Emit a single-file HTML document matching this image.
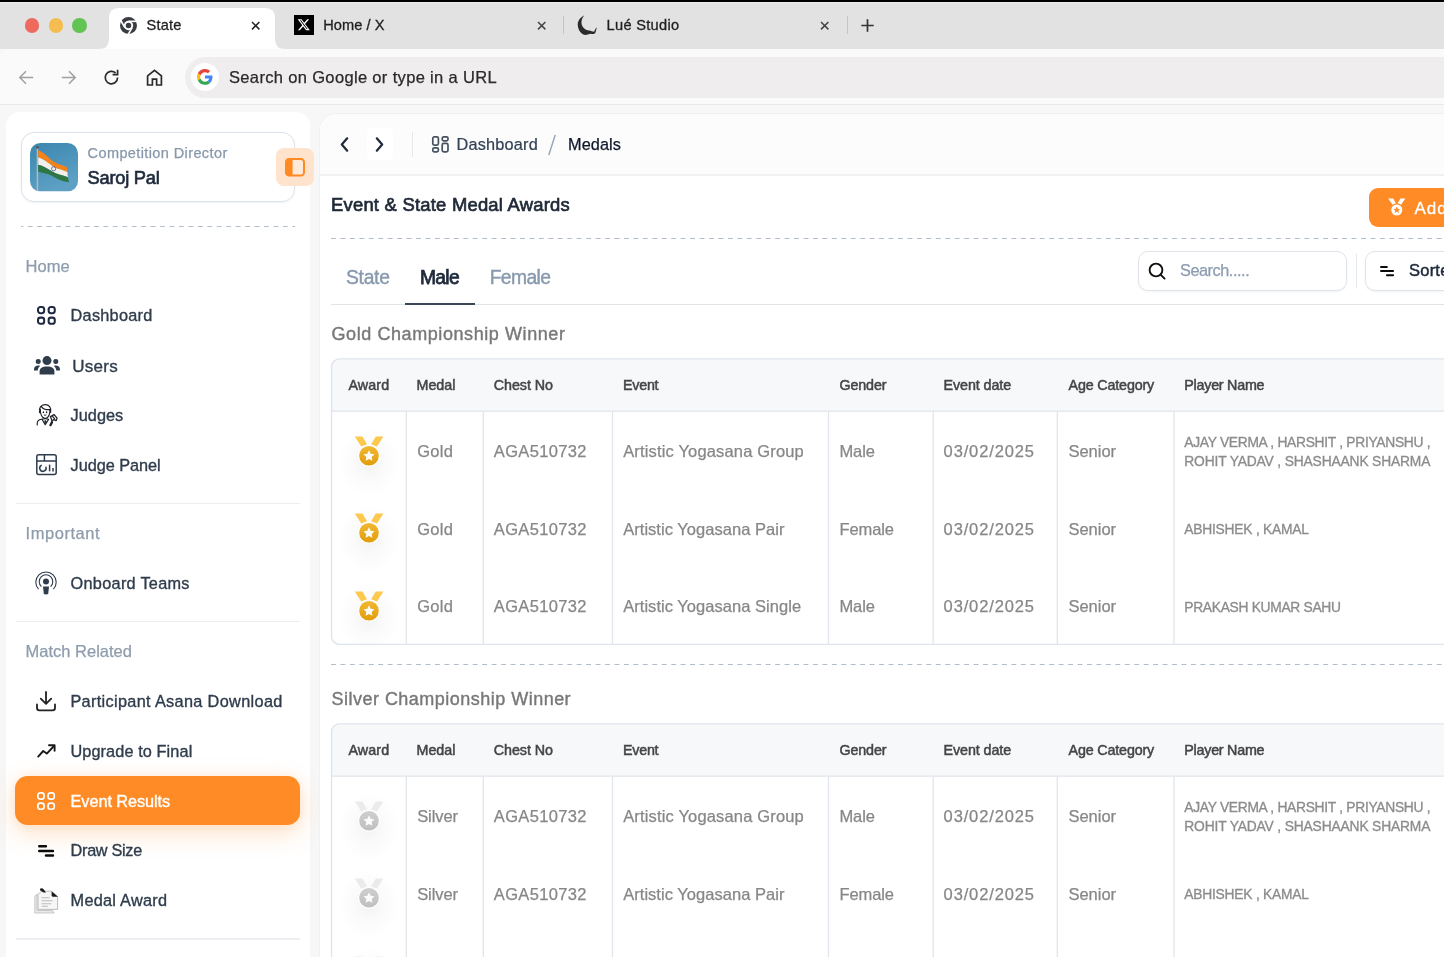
<!DOCTYPE html><html><head><meta charset="utf-8"><title>State</title><style>
html,body{margin:0;padding:0}
body{width:1444px;height:957px;overflow:hidden;position:relative;background:#f7f7f7;
 font-family:"Liberation Sans",sans-serif;}
.t{position:absolute;white-space:nowrap;font-family:"Liberation Sans",sans-serif}
.a{position:absolute}
svg{position:absolute;overflow:visible}
</style></head><body><div id="wrap" style="position:absolute;left:0;top:0;width:1444px;height:957px;will-change:transform;overflow:hidden">
<div class="a" style="left:0;top:0;width:1444px;height:49px;background:#e2e2e2"></div>
<div class="a" style="left:0;top:0;width:1444px;height:2px;background:#000"></div>
<div class="a" style="left:0;top:2px;width:1444px;height:1px;background:#ececec"></div>
<div class="a" style="left:0;top:49px;width:1444px;height:55px;background:#fafafa;border-top-left-radius:9px"></div>
<div class="a" style="left:0;top:104px;width:1444px;height:1px;background:#e9e9e9"></div>
<svg style="left:99px;top:8px" width="190" height="41" viewBox="0 0 190 41"><path d="M0 41 Q10 41 10 31 L10 10 Q10 0 20 0 L166 0 Q176 0 176 10 L176 31 Q176 41 186 41 Z" fill="#ffffff"/></svg>
<div class="a" style="left:24.8px;top:18.4px;width:14.4px;height:14.4px;border-radius:50%;background:#ee6a5f"></div>
<div class="a" style="left:48.6px;top:18.4px;width:14.4px;height:14.4px;border-radius:50%;background:#f5bd4f"></div>
<div class="a" style="left:72.3px;top:18.4px;width:14.4px;height:14.4px;border-radius:50%;background:#61c454"></div>
<svg style="left:119.6px;top:16.5px" width="17" height="17" viewBox="0 0 24 24">
<circle cx="12" cy="12" r="12" fill="#3a3d42"/>
<g stroke="#fff" stroke-width="2.3"><path d="M12 6.1 H24"/><path d="M12 6.1 H24" transform="rotate(120 12 12)"/><path d="M12 6.1 H24" transform="rotate(240 12 12)"/></g>
<circle cx="12" cy="12" r="6.6" fill="#fff"/>
<circle cx="12" cy="12" r="3.9" fill="#3a3d42"/>
</svg>
<div class="t" style="left:146.5px;top:18px;font-size:14.6px;line-height:14.6px;color:#1f1f1f;-webkit-text-stroke:0.3px #1f1f1f;letter-spacing:0.182px;">State</div>
<svg style="left:252.3px;top:21.6px" width="7.4" height="7.4" viewBox="0 0 7.4 7.4"><path d="M0 0 L7.4 7.4 M7.4 0 L0 7.4" stroke="#222" stroke-width="1.5"/></svg>
<div class="a" style="left:294px;top:14.5px;width:19.5px;height:20.5px;background:#000"></div>
<svg style="left:297px;top:18px" width="13.5" height="13.5" viewBox="0 0 24 24"><path d="M18.244 2.25h3.308l-7.227 8.26 8.502 11.24H16.17l-5.214-6.817L4.99 21.75H1.68l7.73-8.835L1.254 2.25H8.08l4.713 6.231zm-1.161 17.52h1.833L7.084 4.126H5.117z" fill="#fff"/></svg>
<div class="t" style="left:323.2px;top:18px;font-size:14.6px;line-height:14.6px;color:#1f1f1f;-webkit-text-stroke:0.3px #1f1f1f;letter-spacing:0.056px;">Home / X</div>
<svg style="left:537.5px;top:21.7px" width="7.4" height="7.4" viewBox="0 0 7.4 7.4"><path d="M0 0 L7.4 7.4 M7.4 0 L0 7.4" stroke="#444" stroke-width="1.5"/></svg>
<div class="a" style="left:563px;top:15.5px;width:1.2px;height:18px;background:#c4c4c4"></div>
<svg style="left:577px;top:15px" width="21" height="21" viewBox="0 0 21 21"><path d="M7.4 0.2 C3 2.5 0.4 6 0.8 10.4 C1.2 15.4 4.6 20 9 19.9 C11.6 19.8 12.6 18.6 14.4 18.9 C16.6 19.4 18.4 18.8 18.9 16.2 L19.8 12.3 C18.4 13.6 17.6 15.2 17.2 16.8 C15.4 16.6 14 15.6 12 15.4 C8 15 4.7 12 4.5 8 C4.4 5 5.5 2.2 7.4 0.2 Z" fill="#2b2b2e"/></svg>
<div class="t" style="left:606.6px;top:18px;font-size:14.6px;line-height:14.6px;color:#1f1f1f;-webkit-text-stroke:0.3px #1f1f1f;letter-spacing:0.299px;">Lué Studio</div>
<svg style="left:820.7px;top:21.6px" width="7.4" height="7.4" viewBox="0 0 7.4 7.4"><path d="M0 0 L7.4 7.4 M7.4 0 L0 7.4" stroke="#444" stroke-width="1.5"/></svg>
<div class="a" style="left:846.5px;top:15.5px;width:1.2px;height:18px;background:#c4c4c4"></div>
<svg style="left:861px;top:19px" width="13" height="13" viewBox="0 0 13 13"><path d="M6.5 0.3 V12.7 M0.3 6.5 H12.7" stroke="#333" stroke-width="1.7"/></svg>
<svg style="left:18px;top:69px" width="17" height="17" viewBox="0 0 17 17"><path d="M15.2 8.5 H2 M8 2.2 L1.8 8.5 L8 14.8" fill="none" stroke="#a0a0a0" stroke-width="1.5" stroke-linejoin="miter"/></svg>
<svg style="left:60px;top:69px" width="17" height="17" viewBox="0 0 17 17"><path d="M1.8 8.5 H15 M9 2.2 L15.2 8.5 L9 14.8" fill="none" stroke="#a0a0a0" stroke-width="1.5"/></svg>
<svg style="left:102.5px;top:68.5px" width="17" height="17" viewBox="0 0 17 17"><path d="M14.6 8.6 A6.2 6.2 0 1 1 12.6 4" fill="none" stroke="#2b2b2b" stroke-width="1.7"/><path d="M9.6 5.6 H14.6 V0.8" fill="none" stroke="#2b2b2b" stroke-width="1.7"/></svg>
<svg style="left:146px;top:68.5px" width="17" height="17" viewBox="0 0 17 17"><path d="M1.6 16 V6.8 L8.5 1.3 L15.4 6.8 V16 H10.6 V10.2 H6.4 V16 Z" fill="none" stroke="#2b2b2b" stroke-width="1.7" stroke-linejoin="miter"/></svg>
<div class="a" style="left:185px;top:57px;width:1300px;height:41px;border-radius:20.5px;background:#efedee"></div>
<div class="a" style="left:191px;top:63px;width:28px;height:28px;border-radius:50%;background:#fff"></div>
<svg style="left:197.2px;top:69.2px" width="15.8" height="15.8" viewBox="0 0 48 48">
<path fill="#EA4335" d="M24 9.5c3.54 0 6.71 1.22 9.21 3.6l6.85-6.85C35.9 2.38 30.47 0 24 0 14.62 0 6.51 5.38 2.56 13.22l7.98 6.19C12.43 13.72 17.74 9.5 24 9.5z"/>
<path fill="#4285F4" d="M46.98 24.55c0-1.57-.15-3.09-.38-4.55H24v9.02h12.94c-.58 2.96-2.26 5.48-4.78 7.18l7.73 6c4.51-4.18 7.09-10.36 7.09-17.65z"/>
<path fill="#FBBC05" d="M10.53 28.59c-.48-1.45-.76-2.99-.76-4.59s.27-3.14.76-4.59l-7.98-6.19C.92 16.46 0 20.12 0 24c0 3.88.92 7.54 2.56 10.78l7.97-6.19z"/>
<path fill="#34A853" d="M24 48c6.48 0 11.93-2.13 15.89-5.81l-7.73-6c-2.15 1.45-4.92 2.3-8.16 2.3-6.26 0-11.57-4.22-13.47-9.91l-7.98 6.19C6.51 42.62 14.62 48 24 48z"/></svg>
<div class="t" style="left:229.0px;top:69px;font-size:16.5px;line-height:16.5px;color:#2a2a2a;-webkit-text-stroke:0.25px #2a2a2a;letter-spacing:0.339px;">Search on Google or type in a URL</div>
<div class="a" style="left:6px;top:112px;width:304px;height:860px;background:#fff;border-radius:14px 14px 0 0"></div>
<div class="a" style="left:20.6px;top:132px;width:274.4px;height:70.2px;border:1.3px solid #dbe2ea;border-radius:13px;box-sizing:border-box;box-shadow:0 1px 2px rgba(100,120,150,.10)"></div>
<svg style="left:30px;top:142.7px" width="48" height="48.5" viewBox="0 0 48 48.5">
<defs><linearGradient id="sky" x1="0" y1="0" x2="0.4" y2="1"><stop offset="0" stop-color="#3b86b0"/><stop offset="1" stop-color="#5da0c4"/></linearGradient>
<clipPath id="avc"><rect x="0" y="0" width="48" height="48.5" rx="10.5"/></clipPath></defs>
<g clip-path="url(#avc)"><rect width="48" height="48.5" fill="url(#sky)"/>
<rect x="6.7" y="4.5" width="1.5" height="44" fill="#b9b9b4"/><rect x="6.2" y="3.3" width="2.4" height="2.2" fill="#5a4a3a"/>
<path d="M8.2 7.3 C13 8.6 17 13.6 22 17.4 C27 21.2 32 21.6 37.2 24.4 L37.4 29 C32 26.4 27.4 26.4 22.4 23 C17.4 19.6 13 15.6 8.2 14.6 Z" fill="#f6821a"/>
<path d="M8.2 14.6 C13 15.6 17.4 19.6 22.4 23 C27.4 26.4 32 26.4 37.4 29 L37.8 34.2 C32.4 31.8 27.6 31.8 22.6 28.8 C17.6 25.8 13 22.6 8.2 21.8 Z" fill="#f3f0ea"/>
<path d="M8.2 21.8 C13 22.6 17.6 25.8 22.6 28.8 C27.6 31.8 32.4 31.8 37.8 34.2 L38.9 39.2 C33 38.6 28 36.2 23 33.4 C18 30.6 13 29.8 8.2 28.8 Z" fill="#2e7744"/>
<circle cx="23.6" cy="25.8" r="2.1" fill="none" stroke="#4a5a8a" stroke-width=".8"/>
</g></svg>
<div class="t" style="left:87.6px;top:146px;font-size:14.5px;line-height:14.5px;color:#8797aa;-webkit-text-stroke:0.25px #8797aa;letter-spacing:0.393px;">Competition Director</div>
<div class="t" style="left:87.6px;top:169px;font-size:18.3px;line-height:18.3px;color:#1e293b;-webkit-text-stroke:0.65px #1e293b;letter-spacing:-0.250px;">Saroj Pal</div>
<div class="a" style="left:276px;top:148.3px;width:38px;height:37.4px;border-radius:8px;background:#ffe3cc"></div>
<svg style="left:285px;top:157.7px" width="20" height="18.6" viewBox="0 0 20 18.6"><rect x="1" y="1" width="18" height="16.6" rx="3.2" fill="#ffe9d8" stroke="#ff8a24" stroke-width="2"/><path d="M3.8 0.6 H7.6 V18 H3.8 A3.2 3.2 0 0 1 0.6 14.8 V3.8 A3.2 3.2 0 0 1 3.8 0.6Z" fill="#ff8a24"/></svg>
<svg style="left:21px;top:226px" width="274" height="1" viewBox="0 0 274 1"><path d="M0 0.5 H274" stroke="#b3bfcc" stroke-width="1" stroke-dasharray="4.9 4.55" stroke-dashoffset="2.7"/></svg>
<div class="t" style="left:25.6px;top:258px;font-size:16.5px;line-height:16.5px;color:#8e9cac;-webkit-text-stroke:0.25px #8e9cac;letter-spacing:0.047px;">Home</div>
<div class="t" style="left:25.6px;top:525px;font-size:16.5px;line-height:16.5px;color:#8e9cac;-webkit-text-stroke:0.25px #8e9cac;letter-spacing:0.534px;">Important</div>
<div class="t" style="left:25.6px;top:643px;font-size:16.5px;line-height:16.5px;color:#8e9cac;-webkit-text-stroke:0.25px #8e9cac;letter-spacing:-0.006px;">Match Related</div>
<div class="a" style="left:15.5px;top:502.6px;width:284.5px;height:1.3px;background:#eceef1"></div>
<div class="a" style="left:15.5px;top:620.8px;width:284.5px;height:1.3px;background:#eceef1"></div>
<div class="a" style="left:15.5px;top:938.3px;width:284.5px;height:1.3px;background:#eceef1"></div>
<div class="a" style="left:15.4px;top:775.5px;width:284.8px;height:49.7px;border-radius:12.5px;background:#ff8b26;box-shadow:0 8px 24px rgba(255,139,38,.26), 0 0 10px rgba(255,139,38,.12)"></div>
<div class="t" style="left:70.6px;top:307px;font-size:16.3px;line-height:16.3px;color:#2f3c4c;-webkit-text-stroke:0.35px #2f3c4c;letter-spacing:0.252px;">Dashboard</div>
<div class="t" style="left:72.3px;top:358px;font-size:17px;line-height:17px;color:#2f3c4c;-webkit-text-stroke:0.35px #2f3c4c;letter-spacing:0.262px;">Users</div>
<div class="t" style="left:70.6px;top:407px;font-size:16.3px;line-height:16.3px;color:#2f3c4c;-webkit-text-stroke:0.35px #2f3c4c;letter-spacing:0.024px;">Judges</div>
<div class="t" style="left:70.6px;top:457px;font-size:16.3px;line-height:16.3px;color:#2f3c4c;-webkit-text-stroke:0.35px #2f3c4c;letter-spacing:-0.057px;">Judge Panel</div>
<div class="t" style="left:70.6px;top:575px;font-size:16.3px;line-height:16.3px;color:#2f3c4c;-webkit-text-stroke:0.35px #2f3c4c;letter-spacing:0.280px;">Onboard Teams</div>
<div class="t" style="left:70.4px;top:693px;font-size:16.3px;line-height:16.3px;color:#2f3c4c;-webkit-text-stroke:0.35px #2f3c4c;letter-spacing:0.332px;">Participant Asana Download</div>
<div class="t" style="left:70.4px;top:743px;font-size:16.3px;line-height:16.3px;color:#2f3c4c;-webkit-text-stroke:0.35px #2f3c4c;letter-spacing:0.100px;">Upgrade to Final</div>
<div class="t" style="left:70.6px;top:793px;font-size:16.3px;line-height:16.3px;color:#ffffff;-webkit-text-stroke:0.35px #ffffff;letter-spacing:-0.081px;">Event Results</div>
<div class="t" style="left:70.6px;top:842px;font-size:16.3px;line-height:16.3px;color:#2f3c4c;-webkit-text-stroke:0.35px #2f3c4c;letter-spacing:-0.319px;">Draw Size</div>
<div class="t" style="left:70.6px;top:892px;font-size:16.3px;line-height:16.3px;color:#2f3c4c;-webkit-text-stroke:0.35px #2f3c4c;letter-spacing:0.252px;">Medal Award</div>
<svg style="left:36.9px;top:305.9px" width="18.8" height="18.8" viewBox="0 0 18.8 18.8"><rect x="1.02" y="1.02" width="6.15" height="6.15" rx="2.4" fill="none" stroke="#1f2942" stroke-width="2.05"/><rect x="11.63" y="1.02" width="6.15" height="6.15" rx="2.4" fill="none" stroke="#1f2942" stroke-width="2.05"/><rect x="1.02" y="11.63" width="6.15" height="6.15" rx="2.4" fill="none" stroke="#1f2942" stroke-width="2.05"/><rect x="11.63" y="11.63" width="6.15" height="6.15" rx="2.4" fill="none" stroke="#1f2942" stroke-width="2.05"/></svg>
<svg style="left:37.1px;top:791.7px" width="18.1" height="18.1" viewBox="0 0 18.1 18.1"><rect x="0.85" y="0.85" width="6.19" height="6.19" rx="2.4" fill="none" stroke="#ffffff" stroke-width="1.7"/><rect x="11.06" y="0.85" width="6.19" height="6.19" rx="2.4" fill="none" stroke="#ffffff" stroke-width="1.7"/><rect x="0.85" y="11.06" width="6.19" height="6.19" rx="2.4" fill="none" stroke="#ffffff" stroke-width="1.7"/><rect x="11.06" y="11.06" width="6.19" height="6.19" rx="2.4" fill="none" stroke="#ffffff" stroke-width="1.7"/></svg>
<svg style="left:34px;top:356px" width="26" height="18.4" viewBox="0 0 26 18.4" fill="#2f3c4c">
<circle cx="13" cy="4.6" r="4.5"/><path d="M5.6 18.4 V15.6 C5.6 12.4 8.2 10.6 13 10.6 C17.8 10.6 20.4 12.4 20.4 15.6 V18.4 Z" />
<circle cx="4.2" cy="5.4" r="2.5"/><circle cx="21.8" cy="5.4" r="2.5"/>
<path d="M0 13.6 C0 11 1.6 9.6 4.4 9.6 C5 9.6 5.6 9.7 6.1 9.9 C4.6 11 3.8 12.7 3.8 14.6 H0 Z"/>
<path d="M26 13.6 C26 11 24.4 9.6 21.6 9.6 C21 9.6 20.4 9.7 19.9 9.9 C21.4 11 22.2 12.7 22.2 14.6 H26 Z"/></svg>
<svg style="left:36px;top:404px" width="22" height="23" viewBox="0 0 22 23" fill="none" stroke="#1d2126" stroke-width="1.15" stroke-linecap="round" stroke-linejoin="round">
<path d="M3.6 8.6 C2.6 4 5 0.7 9 0.6 C13 0.5 15.6 3.6 14.6 8.4"/>
<path d="M5.4 2.6 C6.6 4.4 8 5.6 10 5.6 H14.2" stroke-width="1.3"/>
<path d="M4.4 5.4 C4.2 7 4.6 9 5 10.4 C5.8 12.8 7.4 14.2 9.2 14.2 C11 14.2 12.6 12.6 13.4 10.2 C13.8 8.8 14 7 13.8 5.8"/>
<path d="M7.4 8 V8.6 M10.6 8 V8.6" stroke-width="1.4"/><path d="M8.2 11.1 Q9.1 11.9 10 11.1" stroke-width="1"/>
<path d="M1.2 21 C0.8 17.4 2.4 15.4 5.6 15.2 L8.8 14.6"/>
<path d="M6 15.2 L9.2 20.8 L12.6 15.4 L9.6 14.6" />
<path d="M9.3 16.2 L10.3 17.4 L9.5 19.6 L8.6 18.2 Z" fill="#1d2126" stroke-width=".6"/>
<path d="M14.4 12.6 L18.2 10.6 L21 14.2 L20.2 16.6 L17.6 15.6 L16.2 17.2 Z" stroke-width="1.25"/>
<path d="M16.6 12.4 L18.6 14.8 M15.8 17.2 L13.8 21.2 L14.8 21.8 L16.6 18.2" stroke-width="1.2"/>
</svg>
<svg style="left:35.8px;top:454px" width="21" height="21.4" viewBox="0 0 21 21.4" fill="none" stroke="#2f3c4c" stroke-width="1.5">
<rect x="0.8" y="0.8" width="19.4" height="19.8" rx="2"/><path d="M0.8 7 H20.2 M8.4 0.8 V7"/>
<path d="M5.2 11.4 A3.2 3.2 0 1 0 10 13.2" stroke-linecap="round"/><path d="M13.6 10.6 V17.4" /><path d="M17 14 V17.4"/></svg>
<svg style="left:35.2px;top:570.6px" width="22" height="24" viewBox="0 0 22 24" fill="none" stroke="#2f3c4c">
<path d="M3.6 18.2 A10.2 10.2 0 1 1 18.4 18.2" stroke-width="1.1"/><path d="M6.4 15.6 A6.8 6.8 0 1 1 15.6 15.6" stroke-width="1.1"/>
<circle cx="11" cy="10.6" r="3" fill="#2f3c4c" stroke="none"/><path d="M8 15.6 H14 L13.2 23 Q11 23.8 8.8 23 Z" fill="#2f3c4c" stroke="none"/></svg>
<svg style="left:36.2px;top:690.6px" width="20" height="20.4" viewBox="0 0 20 20.4" fill="none" stroke="#222" stroke-width="1.8" stroke-linecap="round" stroke-linejoin="round">
<path d="M10 1 V12.6 M4.8 7.6 L10 12.8 L15.2 7.6"/><path d="M1 13.4 V17 Q1 19.4 3.4 19.4 H16.6 Q19 19.4 19 17 V13.4"/></svg>
<svg style="left:37px;top:743.6px" width="19" height="14" viewBox="0 0 19 14" fill="none" stroke="#1a1a1a" stroke-width="1.9" stroke-linecap="round" stroke-linejoin="round">
<path d="M1.2 12.6 L6.2 7 L9.8 9.6 L17 2"/><path d="M12 1.2 H17.6 V6.8"/></svg>
<svg style="left:38.10px;top:845.15px" width="16.20" height="11.86" viewBox="0 0 16.20 11.86" stroke="#0b0b0b" stroke-width="2.5" stroke-linecap="round"><path d="M1.25 1.25 H7.90 M1.25 5.93 H14.95 M8.00 10.61 H14.95"/></svg>
<svg style="left:34.2px;top:887.6px" width="25" height="25.6" viewBox="0 0 25 25.6">
<path d="M0.8 8.4 L3 6 V22.4 L18.6 22.6 L20.2 25 H0.8 Z" fill="#e9e9e9" stroke="#bdbdbd" stroke-width=".8"/>
<path d="M4 6.4 L7.4 3.2 H17.4 L23.6 8.6 V21.4 H4 Z" fill="#f6f6f6" stroke="#b5b5b5" stroke-width=".9"/>
<path d="M7.6 9.8 H15.6 M7.6 12.8 H18.6 M7.6 15.8 H17.2 M7.6 18.2 H14" stroke="#bcbcbc" stroke-width="1.1"/>
<path d="M17.6 3.2 L24 8.8 H19.2 Q17.6 8.8 17.6 7.2 Z" fill="#1c1c1c"/>
<path d="M6.4 0.6 Q8.4 -0.2 9.8 1.6 L12 4.6 L9.6 4.4 L6.6 2.8 Q5.4 1.4 6.4 0.6Z" fill="#1c1c1c"/></svg>
<div class="a" style="left:320px;top:113.5px;width:1200px;height:860px;background:#fff;border-radius:16px 0 0 0;box-shadow:0 0 0 1px #f1f1f1"></div>
<div class="a" style="left:320px;top:113.5px;width:1200px;height:61px;background:#fcfcfc;border-radius:16px 0 0 0"></div>
<div class="a" style="left:320px;top:174.3px;width:1124px;height:1.3px;background:#f0f1f3"></div>
<div class="a" style="left:367px;top:128px;width:25.5px;height:32px;background:#fff;border-radius:6px"></div>
<svg style="left:340px;top:137px" width="9" height="15" viewBox="0 0 9 15"><path d="M7.2 1.3 L1.8 7.5 L7.2 13.7" fill="none" stroke="#1e293b" stroke-width="2.2" stroke-linecap="round" stroke-linejoin="round"/></svg>
<svg style="left:375px;top:137px" width="9" height="15" viewBox="0 0 9 15"><path d="M1.8 1.3 L7.2 7.5 L1.8 13.7" fill="none" stroke="#1e293b" stroke-width="2.2" stroke-linecap="round" stroke-linejoin="round"/></svg>
<div class="a" style="left:411.7px;top:132px;width:1.2px;height:24.5px;background:#e5e7eb"></div>
<svg style="left:432px;top:136px" width="16.8" height="16.6" viewBox="0 0 16.8 16.6" fill="none" stroke="#46525f" stroke-width="1.7">
<rect x="0.8" y="0.8" width="5.6" height="8.4" rx="1.6"/><rect x="10.2" y="0.8" width="5.8" height="4" rx="1.5"/>
<rect x="0.8" y="11.8" width="5.6" height="4" rx="1.5"/><rect x="10.2" y="7.4" width="5.8" height="8.4" rx="1.6"/></svg>
<div class="t" style="left:456.5px;top:136px;font-size:16.3px;line-height:16.3px;color:#334155;-webkit-text-stroke:0.22px #334155;letter-spacing:0.196px;">Dashboard</div>
<svg style="left:547px;top:134px" width="10" height="22" viewBox="0 0 10 22"><path d="M8.2 1 L1.8 21" stroke="#94a3b8" stroke-width="1.4"/></svg>
<div class="t" style="left:568.0px;top:136px;font-size:16.3px;line-height:16.3px;color:#0f172a;-webkit-text-stroke:0.25px #0f172a;letter-spacing:0.076px;">Medals</div>
<div class="t" style="left:331.0px;top:196px;font-size:18.4px;line-height:18.4px;color:#1f2937;-webkit-text-stroke:0.7px #1f2937;letter-spacing:0.237px;">Event &amp; State Medal Awards</div>
<div class="a" style="left:1369.2px;top:188.2px;width:120px;height:38.4px;border-radius:9px;background:#ff8b26"></div>
<svg style="left:1387.6px;top:198.4px" width="17.6" height="18.4" viewBox="0 0 17.6 18.4"><path d="M0.2 0.6 H5.2 L8.4 6.2 L5.6 8 Z" fill="#fff"/><path d="M17.4 0.6 H12.4 L9.2 6.2 L12 8 Z" fill="#fff"/>
<circle cx="8.8" cy="12" r="6.1" fill="#fff" stroke="#ff8b26" stroke-width="1.1"/><path d="M8.8 8.6 L9.8 10.8 L12.2 11 L10.4 12.6 L11 15 L8.8 13.7 L6.6 15 L7.2 12.6 L5.4 11 L7.8 10.8 Z" fill="#ff8b26"/></svg>
<div class="t" style="left:1414.5px;top:200px;font-size:17px;line-height:17px;color:#fff;-webkit-text-stroke:0.3px #fff;letter-spacing:0.918px;">Add</div>
<svg style="left:331px;top:238px" width="1113" height="1" viewBox="0 0 1113 1"><path d="M0 0.5 H1113" stroke="#b1bdca" stroke-width="1" stroke-dasharray="4.9 4.55" stroke-dashoffset="0"/></svg>
<div class="t" style="left:346.0px;top:268px;font-size:19.3px;line-height:19.3px;color:#8799ad;-webkit-text-stroke:0.4px #8799ad;letter-spacing:-0.272px;">State</div>
<div class="t" style="left:419.9px;top:268px;font-size:19.3px;line-height:19.3px;color:#1e293b;-webkit-text-stroke:0.75px #1e293b;letter-spacing:-0.682px;">Male</div>
<div class="t" style="left:489.7px;top:268px;font-size:19.3px;line-height:19.3px;color:#8799ad;-webkit-text-stroke:0.4px #8799ad;letter-spacing:-0.592px;">Female</div>
<div class="a" style="left:331px;top:303.6px;width:1113px;height:1.4px;background:#e1e3e6"></div>
<div class="a" style="left:404.8px;top:303.2px;width:69.8px;height:2px;background:#3b4656"></div>
<div class="a" style="left:1138px;top:250.8px;width:209px;height:40.2px;border:1.3px solid #dfe4ea;border-radius:10px;box-sizing:border-box;background:#fff;box-shadow:0 1px 2px rgba(100,120,150,.08)"></div>
<svg style="left:1147.5px;top:262px" width="18" height="18" viewBox="0 0 18 18" fill="none" stroke="#111" stroke-width="1.9" stroke-linecap="round"><circle cx="8" cy="8" r="6.4"/><path d="M12.8 12.8 L16.6 16.6"/></svg>
<div class="t" style="left:1180.0px;top:262px;font-size:16.3px;line-height:16.3px;color:#8b9bb0;-webkit-text-stroke:0.25px #8b9bb0;letter-spacing:-0.453px;">Search.....</div>
<div class="a" style="left:1356px;top:254px;width:1.2px;height:33.6px;background:#e5e7eb"></div>
<div class="a" style="left:1365px;top:250.8px;width:120px;height:40.2px;border:1.3px solid #dfe4ea;border-radius:10px;box-sizing:border-box;background:#fff;box-shadow:0 1px 2px rgba(100,120,150,.08)"></div>
<svg style="left:1380.00px;top:265.50px" width="14.10" height="10.20" viewBox="0 0 14.10 10.20" stroke="#0b0b0b" stroke-width="2.0" stroke-linecap="round"><path d="M1.00 1.00 H6.85 M1.00 5.10 H13.10 M6.95 9.20 H13.10"/></svg>
<div class="t" style="left:1409.0px;top:262px;font-size:16.5px;line-height:16.5px;color:#1e293b;-webkit-text-stroke:0.5px #1e293b;letter-spacing:0.232px;">Sorted</div>
<div class="t" style="left:331.5px;top:325px;font-size:18px;line-height:18px;color:#787878;-webkit-text-stroke:0.4px #787878;letter-spacing:0.579px;">Gold Championship Winner</div>
<svg style="left:320px;top:348px" width="1124" height="315" viewBox="320 348 1124 315"><path d="M339.5 358.9 H1500 V644.4 H339.5 A8 8 0 0 1 331.5 636.4 V366.9 A8 8 0 0 1 339.5 358.9 Z" fill="#fff" stroke="none"/><path d="M339.5 358.9 H1500 V411.09999999999997 H331.5 V366.9 A8 8 0 0 1 339.5 358.9 Z" fill="#f6f8fa"/><path d="M339.5 358.9 H1500 V644.4 H339.5 A8 8 0 0 1 331.5 636.4 V366.9 A8 8 0 0 1 339.5 358.9 Z" fill="none" stroke="#dfe4ea" stroke-width="1.3"/><path d="M331.5 411.09999999999997 H1500" stroke="#dfe4ea" stroke-width="1.3"/><path d="M406.3 411.09999999999997 V644.4M483.3 411.09999999999997 V644.4M612.5 411.09999999999997 V644.4M828.5 411.09999999999997 V644.4M933.2 411.09999999999997 V644.4M1057.3 411.09999999999997 V644.4M1174.0 411.09999999999997 V644.4" stroke="#e2e6ec" stroke-width="1.3"/></svg><div class="t" style="left:348.5px;top:378px;font-size:14.3px;line-height:14.3px;color:#454545;-webkit-text-stroke:0.5px #454545;letter-spacing:0.086px;">Award</div><div class="t" style="left:416.5px;top:378px;font-size:14.3px;line-height:14.3px;color:#454545;-webkit-text-stroke:0.5px #454545;letter-spacing:-0.029px;">Medal</div><div class="t" style="left:493.7px;top:378px;font-size:14.3px;line-height:14.3px;color:#454545;-webkit-text-stroke:0.5px #454545;letter-spacing:-0.038px;">Chest No</div><div class="t" style="left:623.0px;top:378px;font-size:14.3px;line-height:14.3px;color:#454545;-webkit-text-stroke:0.5px #454545;letter-spacing:-0.253px;">Event</div><div class="t" style="left:839.4px;top:378px;font-size:14.3px;line-height:14.3px;color:#454545;-webkit-text-stroke:0.5px #454545;letter-spacing:-0.099px;">Gender</div><div class="t" style="left:943.6px;top:378px;font-size:14.3px;line-height:14.3px;color:#454545;-webkit-text-stroke:0.5px #454545;letter-spacing:-0.097px;">Event date</div><div class="t" style="left:1068.5px;top:378px;font-size:14.3px;line-height:14.3px;color:#454545;-webkit-text-stroke:0.5px #454545;letter-spacing:-0.153px;">Age Category</div><div class="t" style="left:1184.3px;top:378px;font-size:14.3px;line-height:14.3px;color:#454545;-webkit-text-stroke:0.5px #454545;letter-spacing:-0.241px;">Player Name</div><svg style="left:334.8px;top:417.5px" width="68" height="84" viewBox="-12 -6 68 84">
<defs><linearGradient id="ggold455" x1="0" y1="0" x2="0" y2="1"><stop offset="0" stop-color="#f2b832"/><stop offset="1" stop-color="#e09d0c"/></linearGradient>
<radialGradient id="sggold455" cx="0.5" cy="0.5" r="0.5"><stop offset="0" stop-color="#000" stop-opacity=".05"/><stop offset="0.5" stop-color="#000" stop-opacity=".018"/><stop offset="1" stop-color="#000" stop-opacity="0"/></radialGradient></defs>
<ellipse cx="22" cy="38" rx="31" ry="35" fill="url(#sggold455)"/>
<path d="M7.8 12.4 H15.4 L20 20.2 L14.2 22.6 Z" fill="#fcc84e"/><path d="M36.4 12.4 H28.8 L24.2 20.2 L30 22.6 Z" fill="#fcc84e"/>
<circle cx="22" cy="31.8" r="10.8" fill="#fff"/>
<circle cx="22" cy="31.8" r="9.8" fill="url(#ggold455)"/>
<path d="M22 26.2 L23.7 29.7 L27.5 30.2 L24.7 32.9 L25.4 36.7 L22 34.9 L18.6 36.7 L19.3 32.9 L16.5 30.2 L20.3 29.7 Z" fill="#fbfbfb"/></svg><div class="t" style="left:417.2px;top:443px;font-size:16.5px;line-height:16.5px;color:#878787;-webkit-text-stroke:0.25px #878787;letter-spacing:0.287px;">Gold</div><div class="t" style="left:493.8px;top:443px;font-size:16.5px;line-height:16.5px;color:#878787;-webkit-text-stroke:0.25px #878787;letter-spacing:0.345px;">AGA510732</div><div class="t" style="left:623.2px;top:443px;font-size:16.5px;line-height:16.5px;color:#878787;-webkit-text-stroke:0.25px #878787;letter-spacing:0.160px;">Artistic Yogasana Group</div><div class="t" style="left:839.4px;top:443px;font-size:16.5px;line-height:16.5px;color:#878787;-webkit-text-stroke:0.25px #878787;letter-spacing:-0.090px;">Male</div><div class="t" style="left:943.6px;top:443px;font-size:16.5px;line-height:16.5px;color:#878787;-webkit-text-stroke:0.25px #878787;letter-spacing:0.863px;">03/02/2025</div><div class="t" style="left:1068.5px;top:443px;font-size:16.5px;line-height:16.5px;color:#878787;-webkit-text-stroke:0.25px #878787;letter-spacing:-0.032px;">Senior</div><div class="t" style="left:1184.3px;top:436px;font-size:13.8px;line-height:13.8px;color:#8c8c8c;-webkit-text-stroke:0.32px #8c8c8c;letter-spacing:-0.290px;">AJAY VERMA , HARSHIT , PRIYANSHU ,</div><div class="t" style="left:1184.3px;top:455px;font-size:13.8px;line-height:13.8px;color:#8c8c8c;-webkit-text-stroke:0.32px #8c8c8c;letter-spacing:-0.150px;">ROHIT YADAV , SHASHAANK SHARMA</div><svg style="left:334.8px;top:495.1px" width="68" height="84" viewBox="-12 -6 68 84">
<defs><linearGradient id="ggold533" x1="0" y1="0" x2="0" y2="1"><stop offset="0" stop-color="#f2b832"/><stop offset="1" stop-color="#e09d0c"/></linearGradient>
<radialGradient id="sggold533" cx="0.5" cy="0.5" r="0.5"><stop offset="0" stop-color="#000" stop-opacity=".05"/><stop offset="0.5" stop-color="#000" stop-opacity=".018"/><stop offset="1" stop-color="#000" stop-opacity="0"/></radialGradient></defs>
<ellipse cx="22" cy="38" rx="31" ry="35" fill="url(#sggold533)"/>
<path d="M7.8 12.4 H15.4 L20 20.2 L14.2 22.6 Z" fill="#fcc84e"/><path d="M36.4 12.4 H28.8 L24.2 20.2 L30 22.6 Z" fill="#fcc84e"/>
<circle cx="22" cy="31.8" r="10.8" fill="#fff"/>
<circle cx="22" cy="31.8" r="9.8" fill="url(#ggold533)"/>
<path d="M22 26.2 L23.7 29.7 L27.5 30.2 L24.7 32.9 L25.4 36.7 L22 34.9 L18.6 36.7 L19.3 32.9 L16.5 30.2 L20.3 29.7 Z" fill="#fbfbfb"/></svg><div class="t" style="left:417.2px;top:521px;font-size:16.5px;line-height:16.5px;color:#878787;-webkit-text-stroke:0.25px #878787;letter-spacing:0.287px;">Gold</div><div class="t" style="left:493.8px;top:521px;font-size:16.5px;line-height:16.5px;color:#878787;-webkit-text-stroke:0.25px #878787;letter-spacing:0.345px;">AGA510732</div><div class="t" style="left:623.2px;top:521px;font-size:16.5px;line-height:16.5px;color:#878787;-webkit-text-stroke:0.25px #878787;letter-spacing:0.036px;">Artistic Yogasana Pair</div><div class="t" style="left:839.4px;top:521px;font-size:16.5px;line-height:16.5px;color:#878787;-webkit-text-stroke:0.25px #878787;letter-spacing:-0.086px;">Female</div><div class="t" style="left:943.6px;top:521px;font-size:16.5px;line-height:16.5px;color:#878787;-webkit-text-stroke:0.25px #878787;letter-spacing:0.863px;">03/02/2025</div><div class="t" style="left:1068.5px;top:521px;font-size:16.5px;line-height:16.5px;color:#878787;-webkit-text-stroke:0.25px #878787;letter-spacing:-0.032px;">Senior</div><div class="t" style="left:1184.3px;top:523px;font-size:13.8px;line-height:13.8px;color:#8c8c8c;-webkit-text-stroke:0.32px #8c8c8c;letter-spacing:-0.224px;">ABHISHEK , KAMAL</div><svg style="left:334.8px;top:572.7px" width="68" height="84" viewBox="-12 -6 68 84">
<defs><linearGradient id="ggold610" x1="0" y1="0" x2="0" y2="1"><stop offset="0" stop-color="#f2b832"/><stop offset="1" stop-color="#e09d0c"/></linearGradient>
<radialGradient id="sggold610" cx="0.5" cy="0.5" r="0.5"><stop offset="0" stop-color="#000" stop-opacity=".05"/><stop offset="0.5" stop-color="#000" stop-opacity=".018"/><stop offset="1" stop-color="#000" stop-opacity="0"/></radialGradient></defs>
<ellipse cx="22" cy="38" rx="31" ry="35" fill="url(#sggold610)"/>
<path d="M7.8 12.4 H15.4 L20 20.2 L14.2 22.6 Z" fill="#fcc84e"/><path d="M36.4 12.4 H28.8 L24.2 20.2 L30 22.6 Z" fill="#fcc84e"/>
<circle cx="22" cy="31.8" r="10.8" fill="#fff"/>
<circle cx="22" cy="31.8" r="9.8" fill="url(#ggold610)"/>
<path d="M22 26.2 L23.7 29.7 L27.5 30.2 L24.7 32.9 L25.4 36.7 L22 34.9 L18.6 36.7 L19.3 32.9 L16.5 30.2 L20.3 29.7 Z" fill="#fbfbfb"/></svg><div class="t" style="left:417.2px;top:598px;font-size:16.5px;line-height:16.5px;color:#878787;-webkit-text-stroke:0.25px #878787;letter-spacing:0.287px;">Gold</div><div class="t" style="left:493.8px;top:598px;font-size:16.5px;line-height:16.5px;color:#878787;-webkit-text-stroke:0.25px #878787;letter-spacing:0.345px;">AGA510732</div><div class="t" style="left:623.2px;top:598px;font-size:16.5px;line-height:16.5px;color:#878787;-webkit-text-stroke:0.25px #878787;letter-spacing:0.040px;">Artistic Yogasana Single</div><div class="t" style="left:839.4px;top:598px;font-size:16.5px;line-height:16.5px;color:#878787;-webkit-text-stroke:0.25px #878787;letter-spacing:-0.090px;">Male</div><div class="t" style="left:943.6px;top:598px;font-size:16.5px;line-height:16.5px;color:#878787;-webkit-text-stroke:0.25px #878787;letter-spacing:0.863px;">03/02/2025</div><div class="t" style="left:1068.5px;top:598px;font-size:16.5px;line-height:16.5px;color:#878787;-webkit-text-stroke:0.25px #878787;letter-spacing:-0.032px;">Senior</div><div class="t" style="left:1184.3px;top:601px;font-size:13.8px;line-height:13.8px;color:#8c8c8c;-webkit-text-stroke:0.32px #8c8c8c;letter-spacing:-0.300px;">PRAKASH KUMAR SAHU</div>
<svg style="left:331px;top:664px" width="1113" height="1" viewBox="0 0 1113 1"><path d="M0 0.5 H1113" stroke="#b1bdca" stroke-width="1" stroke-dasharray="4.9 4.55" stroke-dashoffset="0"/></svg>
<div class="t" style="left:331.5px;top:690px;font-size:18px;line-height:18px;color:#787878;-webkit-text-stroke:0.4px #787878;letter-spacing:0.481px;">Silver Championship Winner</div>
<svg style="left:320px;top:713px" width="1124" height="315" viewBox="320 713 1124 315"><path d="M339.5 723.95 H1500 V1009.45 H339.5 A8 8 0 0 1 331.5 1001.45 V731.95 A8 8 0 0 1 339.5 723.95 Z" fill="#fff" stroke="none"/><path d="M339.5 723.95 H1500 V776.1500000000001 H331.5 V731.95 A8 8 0 0 1 339.5 723.95 Z" fill="#f6f8fa"/><path d="M339.5 723.95 H1500 V1009.45 H339.5 A8 8 0 0 1 331.5 1001.45 V731.95 A8 8 0 0 1 339.5 723.95 Z" fill="none" stroke="#dfe4ea" stroke-width="1.3"/><path d="M331.5 776.1500000000001 H1500" stroke="#dfe4ea" stroke-width="1.3"/><path d="M406.3 776.1500000000001 V1009.45M483.3 776.1500000000001 V1009.45M612.5 776.1500000000001 V1009.45M828.5 776.1500000000001 V1009.45M933.2 776.1500000000001 V1009.45M1057.3 776.1500000000001 V1009.45M1174.0 776.1500000000001 V1009.45" stroke="#e2e6ec" stroke-width="1.3"/></svg><div class="t" style="left:348.5px;top:743px;font-size:14.3px;line-height:14.3px;color:#454545;-webkit-text-stroke:0.5px #454545;letter-spacing:0.086px;">Award</div><div class="t" style="left:416.5px;top:743px;font-size:14.3px;line-height:14.3px;color:#454545;-webkit-text-stroke:0.5px #454545;letter-spacing:-0.029px;">Medal</div><div class="t" style="left:493.7px;top:743px;font-size:14.3px;line-height:14.3px;color:#454545;-webkit-text-stroke:0.5px #454545;letter-spacing:-0.038px;">Chest No</div><div class="t" style="left:623.0px;top:743px;font-size:14.3px;line-height:14.3px;color:#454545;-webkit-text-stroke:0.5px #454545;letter-spacing:-0.253px;">Event</div><div class="t" style="left:839.4px;top:743px;font-size:14.3px;line-height:14.3px;color:#454545;-webkit-text-stroke:0.5px #454545;letter-spacing:-0.099px;">Gender</div><div class="t" style="left:943.6px;top:743px;font-size:14.3px;line-height:14.3px;color:#454545;-webkit-text-stroke:0.5px #454545;letter-spacing:-0.097px;">Event date</div><div class="t" style="left:1068.5px;top:743px;font-size:14.3px;line-height:14.3px;color:#454545;-webkit-text-stroke:0.5px #454545;letter-spacing:-0.153px;">Age Category</div><div class="t" style="left:1184.3px;top:743px;font-size:14.3px;line-height:14.3px;color:#454545;-webkit-text-stroke:0.5px #454545;letter-spacing:-0.241px;">Player Name</div><svg style="left:334.8px;top:782.6px" width="68" height="84" viewBox="-12 -6 68 84">
<defs><linearGradient id="gsilver820" x1="0" y1="0" x2="0" y2="1"><stop offset="0" stop-color="#cfcfcf"/><stop offset="1" stop-color="#bfbfbf"/></linearGradient>
<radialGradient id="sgsilver820" cx="0.5" cy="0.5" r="0.5"><stop offset="0" stop-color="#000" stop-opacity=".05"/><stop offset="0.5" stop-color="#000" stop-opacity=".018"/><stop offset="1" stop-color="#000" stop-opacity="0"/></radialGradient></defs>
<ellipse cx="22" cy="38" rx="31" ry="35" fill="url(#sgsilver820)"/>
<path d="M7.8 12.4 H15.4 L20 20.2 L14.2 22.6 Z" fill="#ebebeb"/><path d="M36.4 12.4 H28.8 L24.2 20.2 L30 22.6 Z" fill="#ebebeb"/>
<circle cx="22" cy="31.8" r="10.8" fill="#fff"/>
<circle cx="22" cy="31.8" r="9.8" fill="url(#gsilver820)"/>
<path d="M22 26.2 L23.7 29.7 L27.5 30.2 L24.7 32.9 L25.4 36.7 L22 34.9 L18.6 36.7 L19.3 32.9 L16.5 30.2 L20.3 29.7 Z" fill="#fbfbfb"/></svg><div class="t" style="left:417.2px;top:808px;font-size:16.5px;line-height:16.5px;color:#878787;-webkit-text-stroke:0.25px #878787;letter-spacing:-0.093px;">Silver</div><div class="t" style="left:493.8px;top:808px;font-size:16.5px;line-height:16.5px;color:#878787;-webkit-text-stroke:0.25px #878787;letter-spacing:0.345px;">AGA510732</div><div class="t" style="left:623.2px;top:808px;font-size:16.5px;line-height:16.5px;color:#878787;-webkit-text-stroke:0.25px #878787;letter-spacing:0.160px;">Artistic Yogasana Group</div><div class="t" style="left:839.4px;top:808px;font-size:16.5px;line-height:16.5px;color:#878787;-webkit-text-stroke:0.25px #878787;letter-spacing:-0.090px;">Male</div><div class="t" style="left:943.6px;top:808px;font-size:16.5px;line-height:16.5px;color:#878787;-webkit-text-stroke:0.25px #878787;letter-spacing:0.863px;">03/02/2025</div><div class="t" style="left:1068.5px;top:808px;font-size:16.5px;line-height:16.5px;color:#878787;-webkit-text-stroke:0.25px #878787;letter-spacing:-0.032px;">Senior</div><div class="t" style="left:1184.3px;top:801px;font-size:13.8px;line-height:13.8px;color:#8c8c8c;-webkit-text-stroke:0.32px #8c8c8c;letter-spacing:-0.290px;">AJAY VERMA , HARSHIT , PRIYANSHU ,</div><div class="t" style="left:1184.3px;top:820px;font-size:13.8px;line-height:13.8px;color:#8c8c8c;-webkit-text-stroke:0.32px #8c8c8c;letter-spacing:-0.150px;">ROHIT YADAV , SHASHAANK SHARMA</div><svg style="left:334.8px;top:860.2px" width="68" height="84" viewBox="-12 -6 68 84">
<defs><linearGradient id="gsilver898" x1="0" y1="0" x2="0" y2="1"><stop offset="0" stop-color="#cfcfcf"/><stop offset="1" stop-color="#bfbfbf"/></linearGradient>
<radialGradient id="sgsilver898" cx="0.5" cy="0.5" r="0.5"><stop offset="0" stop-color="#000" stop-opacity=".05"/><stop offset="0.5" stop-color="#000" stop-opacity=".018"/><stop offset="1" stop-color="#000" stop-opacity="0"/></radialGradient></defs>
<ellipse cx="22" cy="38" rx="31" ry="35" fill="url(#sgsilver898)"/>
<path d="M7.8 12.4 H15.4 L20 20.2 L14.2 22.6 Z" fill="#ebebeb"/><path d="M36.4 12.4 H28.8 L24.2 20.2 L30 22.6 Z" fill="#ebebeb"/>
<circle cx="22" cy="31.8" r="10.8" fill="#fff"/>
<circle cx="22" cy="31.8" r="9.8" fill="url(#gsilver898)"/>
<path d="M22 26.2 L23.7 29.7 L27.5 30.2 L24.7 32.9 L25.4 36.7 L22 34.9 L18.6 36.7 L19.3 32.9 L16.5 30.2 L20.3 29.7 Z" fill="#fbfbfb"/></svg><div class="t" style="left:417.2px;top:886px;font-size:16.5px;line-height:16.5px;color:#878787;-webkit-text-stroke:0.25px #878787;letter-spacing:-0.093px;">Silver</div><div class="t" style="left:493.8px;top:886px;font-size:16.5px;line-height:16.5px;color:#878787;-webkit-text-stroke:0.25px #878787;letter-spacing:0.345px;">AGA510732</div><div class="t" style="left:623.2px;top:886px;font-size:16.5px;line-height:16.5px;color:#878787;-webkit-text-stroke:0.25px #878787;letter-spacing:0.036px;">Artistic Yogasana Pair</div><div class="t" style="left:839.4px;top:886px;font-size:16.5px;line-height:16.5px;color:#878787;-webkit-text-stroke:0.25px #878787;letter-spacing:-0.086px;">Female</div><div class="t" style="left:943.6px;top:886px;font-size:16.5px;line-height:16.5px;color:#878787;-webkit-text-stroke:0.25px #878787;letter-spacing:0.863px;">03/02/2025</div><div class="t" style="left:1068.5px;top:886px;font-size:16.5px;line-height:16.5px;color:#878787;-webkit-text-stroke:0.25px #878787;letter-spacing:-0.032px;">Senior</div><div class="t" style="left:1184.3px;top:888px;font-size:13.8px;line-height:13.8px;color:#8c8c8c;-webkit-text-stroke:0.32px #8c8c8c;letter-spacing:-0.224px;">ABHISHEK , KAMAL</div><svg style="left:334.8px;top:937.8px" width="68" height="84" viewBox="-12 -6 68 84">
<defs><linearGradient id="gsilver975" x1="0" y1="0" x2="0" y2="1"><stop offset="0" stop-color="#cfcfcf"/><stop offset="1" stop-color="#bfbfbf"/></linearGradient>
<radialGradient id="sgsilver975" cx="0.5" cy="0.5" r="0.5"><stop offset="0" stop-color="#000" stop-opacity=".05"/><stop offset="0.5" stop-color="#000" stop-opacity=".018"/><stop offset="1" stop-color="#000" stop-opacity="0"/></radialGradient></defs>
<ellipse cx="22" cy="38" rx="31" ry="35" fill="url(#sgsilver975)"/>
<path d="M7.8 12.4 H15.4 L20 20.2 L14.2 22.6 Z" fill="#ebebeb"/><path d="M36.4 12.4 H28.8 L24.2 20.2 L30 22.6 Z" fill="#ebebeb"/>
<circle cx="22" cy="31.8" r="10.8" fill="#fff"/>
<circle cx="22" cy="31.8" r="9.8" fill="url(#gsilver975)"/>
<path d="M22 26.2 L23.7 29.7 L27.5 30.2 L24.7 32.9 L25.4 36.7 L22 34.9 L18.6 36.7 L19.3 32.9 L16.5 30.2 L20.3 29.7 Z" fill="#fbfbfb"/></svg><div class="t" style="left:417.2px;top:963px;font-size:16.5px;line-height:16.5px;color:#878787;-webkit-text-stroke:0.25px #878787;letter-spacing:-0.093px;">Silver</div><div class="t" style="left:493.8px;top:963px;font-size:16.5px;line-height:16.5px;color:#878787;-webkit-text-stroke:0.25px #878787;letter-spacing:0.345px;">AGA510732</div><div class="t" style="left:623.2px;top:963px;font-size:16.5px;line-height:16.5px;color:#878787;-webkit-text-stroke:0.25px #878787;letter-spacing:0.040px;">Artistic Yogasana Single</div><div class="t" style="left:839.4px;top:963px;font-size:16.5px;line-height:16.5px;color:#878787;-webkit-text-stroke:0.25px #878787;letter-spacing:-0.090px;">Male</div><div class="t" style="left:943.6px;top:963px;font-size:16.5px;line-height:16.5px;color:#878787;-webkit-text-stroke:0.25px #878787;letter-spacing:0.863px;">03/02/2025</div><div class="t" style="left:1068.5px;top:963px;font-size:16.5px;line-height:16.5px;color:#878787;-webkit-text-stroke:0.25px #878787;letter-spacing:-0.032px;">Senior</div><div class="t" style="left:1184.3px;top:966px;font-size:13.8px;line-height:13.8px;color:#8c8c8c;-webkit-text-stroke:0.32px #8c8c8c;letter-spacing:-0.300px;">PRAKASH KUMAR SAHU</div>
</div></body></html>
